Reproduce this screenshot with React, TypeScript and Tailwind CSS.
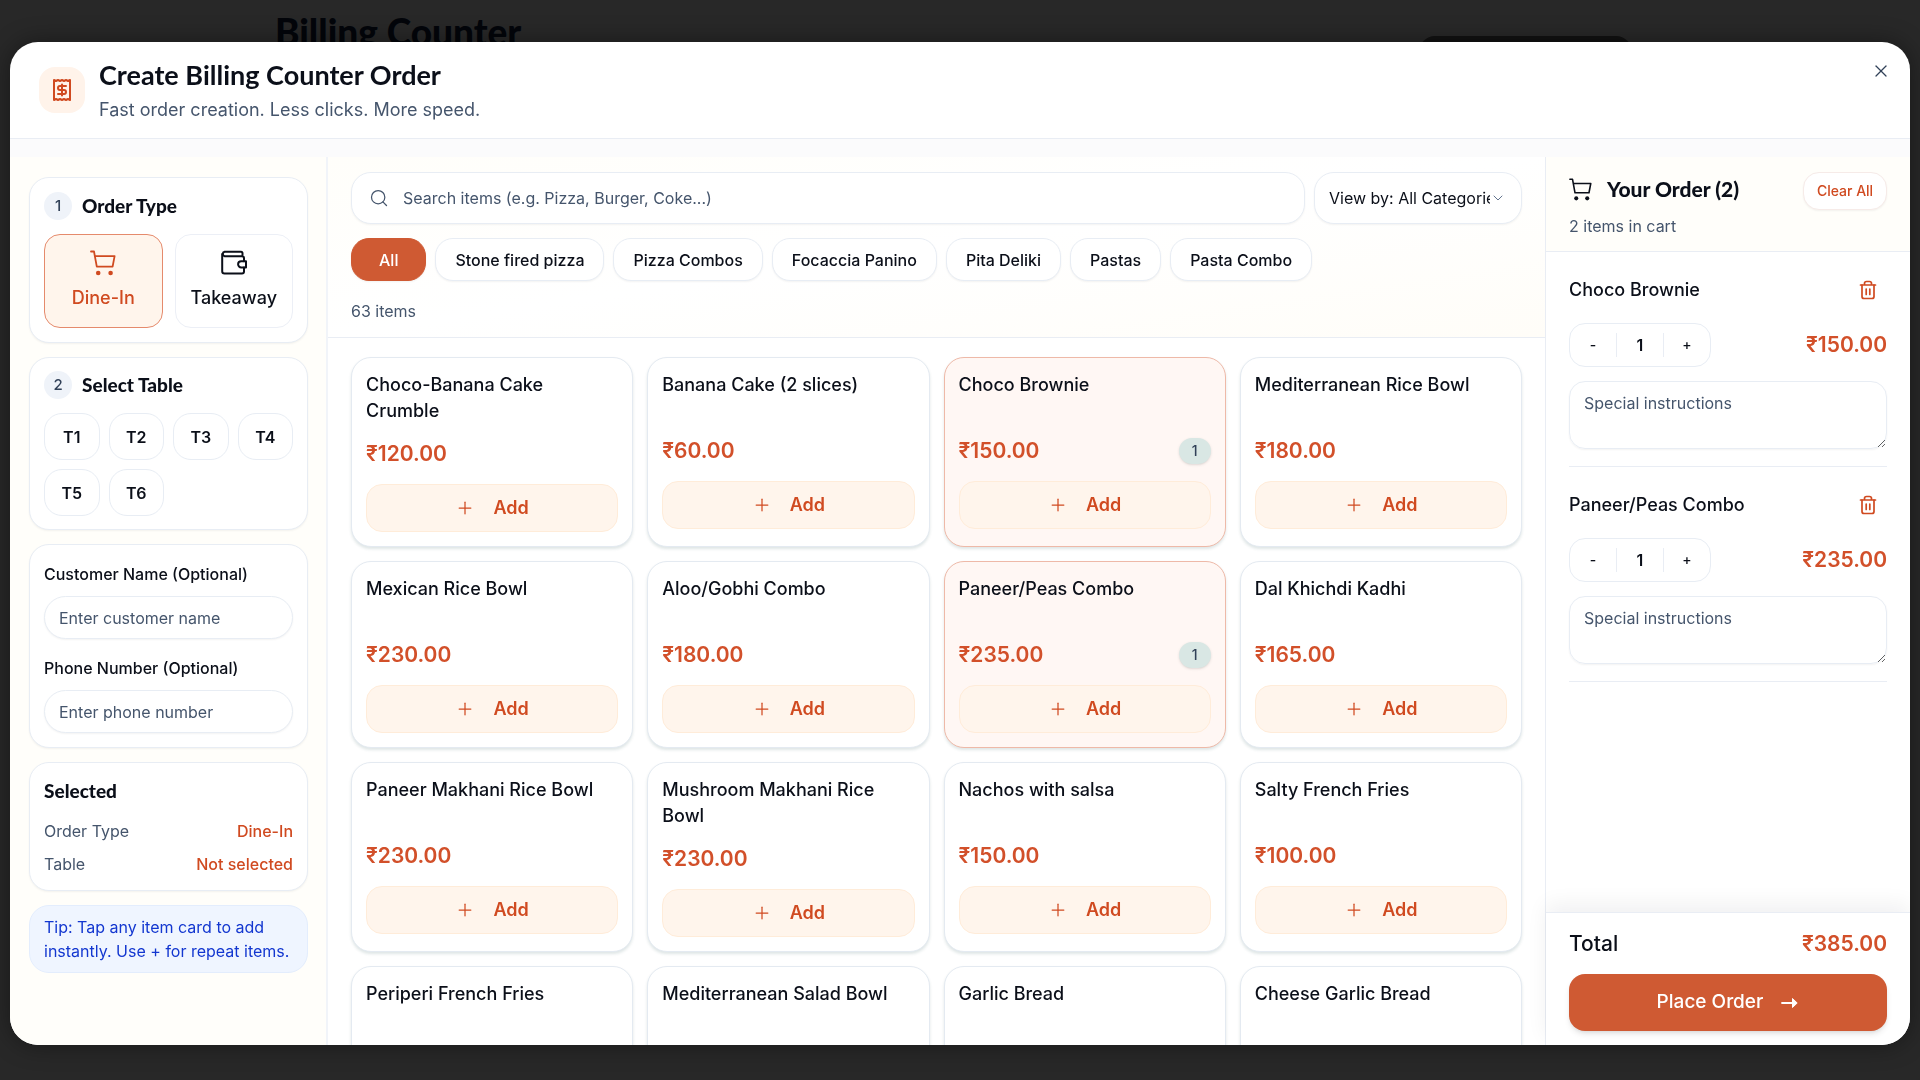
import { useState } from "react";
import type { ReactNode } from "react";
import cx from "clsx";
import { ChevronDown, Plus, Receipt, Search, X } from "lucide-react";

const CATEGORIES = [
  "All",
  "Stone fired pizza",
  "Pizza Combos",
  "Focaccia Panino",
  "Pita Deliki",
  "Pastas",
  "Pasta Combo",
];

const TABLES = ["T1", "T2", "T3", "T4", "T5", "T6"];

type MenuItem = {
  name: string;
  price: number;
};

const MENU: MenuItem[] = [
  { name: "Choco-Banana Cake Crumble", price: 120 },
  { name: "Banana Cake (2 slices)", price: 60 },
  { name: "Choco Brownie", price: 150 },
  { name: "Mediterranean Rice Bowl", price: 180 },
  { name: "Mexican Rice Bowl", price: 230 },
  { name: "Aloo/Gobhi Combo", price: 180 },
  { name: "Paneer/Peas Combo", price: 235 },
  { name: "Dal Khichdi Kadhi", price: 165 },
  { name: "Paneer Makhani Rice Bowl", price: 230 },
  { name: "Mushroom Makhani Rice Bowl", price: 230 },
  { name: "Nachos with salsa", price: 150 },
  { name: "Salty French Fries", price: 100 },
  { name: "Periperi French Fries", price: 120 },
  { name: "Mediterranean Salad Bowl", price: 210 },
  { name: "Garlic Bread", price: 110 },
  { name: "Cheese Garlic Bread", price: 140 },
];

type Cart = Record<string, number>;

const formatPrice = (value: number) => `₹${value.toFixed(2)}`;

function CartIcon({ className }: { className?: string }) {
  return (
    <svg viewBox="0 0 26 26" fill="none" className={className} aria-hidden="true">
      <path
        d="M1 1.5h3l2.8 15.2h15.800l2-10.500H4.800"
        stroke="currentColor"
        strokeWidth="1.8"
        strokeLinecap="round"
        strokeLinejoin="round"
      />
      <circle cx="8.2" cy="23" r="2.3" fill="currentColor" />
      <circle cx="20.6" cy="23" r="2.3" fill="currentColor" />
    </svg>
  );
}

function WalletIcon({ className }: { className?: string }) {
  return (
    <svg
      viewBox="0 0 26 26"
      fill="none"
      stroke="currentColor"
      strokeWidth="2"
      strokeLinecap="round"
      strokeLinejoin="round"
      className={className}
      aria-hidden="true"
    >
      <path d="M21.5 6V3.2c0-.9-.6-1.5-1.500-1.500H3.600a2.300 2.300 0 0 0 0 4.500H21c1.200 0 2 .8 2 2v3" />
      <path d="M23 17.500v4c0 1.200-.8 2-2 2H3.500c-1.300 0-2.300-1-2.300-2.300V3.900" />
      <path d="M25 11.200h-4.800a3.100 3.100 0 0 0 0 6.200H25z" />
    </svg>
  );
}

function TrashIcon({ className }: { className?: string }) {
  return (
    <svg
      viewBox="0 0 18 20"
      fill="none"
      stroke="currentColor"
      strokeWidth="1.7"
      strokeLinecap="round"
      strokeLinejoin="round"
      className={className}
      aria-hidden="true"
    >
      <path d="M1.500 5h15M5.500 5V3.500c0-1.100.9-2 2-2h3c1.100 0 2 .9 2 2V5" />
      <path d="M3 5v11.500c0 1.100.9 2 2 2h8c1.100 0 2-.9 2-2V5" />
      <path d="M7.200 9v5.500M10.800 9v5.500" />
    </svg>
  );
}

function ArrowIcon({ className }: { className?: string }) {
  return (
    <svg viewBox="0 0 18 14" className={className} aria-hidden="true">
      <path d="M1 7h12" stroke="currentColor" strokeWidth="1.8" strokeLinecap="round" />
      <path
        d="M11.500 2.500 16.200 7l-4.700 4.500z"
        fill="currentColor"
        stroke="currentColor"
        strokeLinejoin="round"
      />
    </svg>
  );
}

function Panel({ children, className }: { children: ReactNode; className?: string }) {
  return (
    <section
      className={cx(
        "rounded-[20px] border border-[#e8edf4] bg-white px-[14px] shadow-xs",
        className
      )}
    >
      {children}
    </section>
  );
}

function StepTitle({ step, title }: { step: number; title: string }) {
  return (
    <div className="flex items-center gap-[10px]">
      <span className="flex size-7 items-center justify-center rounded-full bg-[#eff3f9] text-[15px] font-medium text-slate-700">
        {step}
      </span>
      <h3 className="font-[Lato] text-[19px] font-black leading-7">{title}</h3>
    </div>
  );
}

type FieldProps = {
  id: string;
  label: string;
  placeholder: string;
};

function Field({ id, label, placeholder }: FieldProps) {
  return (
    <div>
      <label htmlFor={id} className="block text-base font-medium leading-6">
        {label}
      </label>
      <input
        id={id}
        placeholder={placeholder}
        className="mt-[10px] block h-[43px] w-full rounded-full border border-[#e8edf4] bg-white px-[14px] text-base shadow-xs outline-none placeholder:text-slate-600"
      />
    </div>
  );
}

type OrderType = "Dine-In" | "Takeaway";

function Sidebar() {
  const [orderType, setOrderType] = useState<OrderType>("Dine-In");
  const [table, setTable] = useState("");

  return (
    <aside className="w-[318px] shrink-0 space-y-[14px] border-r-2 border-[#f1f4f9] bg-[#fffefa] pt-5 pr-[18px] pl-[19px]">
      <Panel className="py-[14px]">
        <StepTitle step={1} title="Order Type" />
        <div className="mt-[14px] grid grid-cols-2 gap-3">
          {(["Dine-In", "Takeaway"] as const).map((type) => (
            <button
              key={type}
              onClick={() => setOrderType(type)}
              className={cx(
                "flex h-[94px] flex-col items-center justify-center gap-2 rounded-2xl border text-lg font-medium",
                orderType === type
                  ? "border-[#e58a6c] bg-[#fff5ec] text-[#d04a20]"
                  : "border-[#eceff6] bg-white"
              )}
            >
              {type === "Dine-In" ? (
                <CartIcon className="size-[26px]" />
              ) : (
                <WalletIcon className="size-[26px]" />
              )}
              {type}
            </button>
          ))}
        </div>
      </Panel>

      <Panel className="py-[13px]">
        <StepTitle step={2} title="Select Table" />
        <div className="mt-[14px] grid grid-cols-4 gap-[9px]">
          {TABLES.map((name) => (
            <button
              key={name}
              onClick={() => setTable(name)}
              className="h-[47px] rounded-[18px] border border-[#e8edf4] bg-white text-base font-semibold"
            >
              {name}
            </button>
          ))}
        </div>
      </Panel>

      <Panel className="space-y-[17px] pt-[17px] pb-[14px]">
        <Field
          id="customer-name"
          label="Customer Name (Optional)"
          placeholder="Enter customer name"
        />
        <Field
          id="customer-phone"
          label="Phone Number (Optional)"
          placeholder="Enter phone number"
        />
      </Panel>

      <Panel className="py-[14px]">
        <h3 className="font-[Lato] text-[19px] font-black leading-7">Selected</h3>
        <dl className="mt-[14px] space-y-[9px] text-base">
          <div className="flex justify-between">
            <dt className="text-slate-600">Order Type</dt>
            <dd className="font-medium text-[#d04a20]">{orderType}</dd>
          </div>
          <div className="flex justify-between">
            <dt className="text-slate-600">Table</dt>
            <dd className="font-medium text-[#d04a20]">{table || "Not selected"}</dd>
          </div>
        </dl>
      </Panel>

      <p className="rounded-[20px] border border-[#e3edfd] bg-[#eff5ff] py-[9px] pl-[14px] pr-2 text-base text-[#1337d0]">
        Tip: Tap any item card to add instantly. Use + for repeat items.
      </p>
    </aside>
  );
}

type ItemCardProps = {
  item: MenuItem;
  quantity: number;
  onAdd: () => void;
};

function ItemCard({ item, quantity, onAdd }: ItemCardProps) {
  return (
    <article
      className={cx(
        "rounded-[20px] border p-[14px] shadow-[0_2px_3px_rgba(30,80,80,0.14)]",
        quantity > 0 ? "border-[#eeb9a8] bg-[#fff7f4]" : "border-[#e4eaf1] bg-white"
      )}
    >
      <h4 className="min-h-[49px] text-lg font-medium leading-[26px]">{item.name}</h4>
      <div className="mt-4 flex h-7 items-center justify-between">
        <span className="text-[21px] font-semibold text-[#d2502a]">
          {formatPrice(item.price)}
        </span>
        {quantity > 0 && (
          <span className="flex h-[26px] w-8 items-center justify-center rounded-full bg-[#d9e7e4] text-sm font-medium text-slate-700 shadow-sm">
            {quantity}
          </span>
        )}
      </div>
      <button
        onClick={onAdd}
        className="mt-4 flex h-12 w-full items-center justify-center gap-[18px] rounded-2xl border border-[#ffecd9] bg-[#fff5ec] text-lg font-semibold text-[#d04a20]"
      >
        <Plus className="size-[20px]" strokeWidth={1.5} />
        Add
      </button>
    </article>
  );
}

function Menu({ cart, onAdd }: { cart: Cart; onAdd: (name: string) => void }) {
  const [category, setCategory] = useState("All");

  return (
    <main className="flex min-w-0 flex-1 flex-col">
      <div className="border-b border-[#e9edf4] bg-linear-to-br from-[#fffefa] via-white to-[#fffdf8] px-[23px] pt-[15px] pb-[14px]">
        <div className="flex gap-[9px]">
          <label className="flex h-[52px] flex-1 items-center gap-[14px] rounded-[20px] border border-[#e8edf4] bg-white px-[17px] shadow-xs">
            <Search className="size-5 text-slate-600" strokeWidth={1.5} />
            <input
              aria-label="Search items"
              placeholder="Search items (e.g. Pizza, Burger, Coke...)"
              className="min-w-0 flex-1 text-base outline-none placeholder:text-slate-600"
            />
          </label>
          <div className="relative w-[208px]">
            <select
              aria-label="View by category"
              className="h-[52px] w-full appearance-none rounded-[20px] border border-[#e8edf4] bg-white pl-[14px] pr-[31px] text-base shadow-xs outline-none"
            >
              <option>View by: All Categories</option>
            </select>
            <ChevronDown
              className="pointer-events-none absolute top-[18px] right-4 size-4 text-slate-500"
              strokeWidth={1.5}
            />
          </div>
        </div>

        <div className="mt-[14px] flex gap-[9px]">
          {CATEGORIES.map((name) => (
            <button
              key={name}
              onClick={() => setCategory(name)}
              className={cx(
                "h-[43px] rounded-[18px] border text-base font-medium shadow-xs",
                name === "All" ? "px-[27px]" : "px-[19px]",
                category === name
                  ? "border-[#cf5a33] bg-[#cf5a33] text-white"
                  : "border-[#e8edf4] bg-white"
              )}
            >
              {name}
            </button>
          ))}
        </div>
        <p className="mt-[18px] text-base text-slate-600">63 items</p>
      </div>

      <div className="min-h-0 flex-1 overflow-y-auto px-[23px] pt-[19px] [scrollbar-width:none]">
        <div className="grid grid-cols-4 gap-[14px]">
          {MENU.map((item) => (
            <ItemCard
              key={item.name}
              item={item}
              quantity={cart[item.name] ?? 0}
              onAdd={() => onAdd(item.name)}
            />
          ))}
        </div>
      </div>
    </main>
  );
}

type OrderPanelProps = {
  cart: Cart;
  onChange: (name: string, quantity: number) => void;
  onClear: () => void;
};

function OrderPanel({ cart, onChange, onClear }: OrderPanelProps) {
  const lines = MENU.filter((item) => cart[item.name] > 0);
  const total = lines.reduce((sum, item) => sum + item.price * cart[item.name], 0);

  return (
    <aside className="flex w-[365px] shrink-0 flex-col border-l border-[#e9edf4]">
      <div className="border-b border-[#e9edf4] bg-[#fffefa] px-[23px] pt-[15px] pb-[13px]">
        <div className="flex items-start justify-between">
          <h2 className="flex h-[34px] items-center gap-[15px] font-[Lato] text-[21px] font-black">
            <CartIcon className="size-[23px]" />
            Your Order ({lines.length})
          </h2>
          <button
            onClick={onClear}
            className="h-[38px] w-[84px] rounded-2xl border border-[#f6ebe8] bg-white text-sm font-medium text-[#d04a20] shadow-xs"
          >
            Clear All
          </button>
        </div>
        <p className="mt-1 text-base text-slate-600">{lines.length} items in cart</p>
      </div>

      <ul className="min-h-0 flex-1 overflow-y-auto px-[23px] [scrollbar-width:none]">
        {lines.map((item) => (
          <li key={item.name} className="border-b border-[#e9edf4] pt-6 pb-[17px]">
            <div className="flex h-7 items-center justify-between">
              <h4 className="text-lg font-medium">{item.name}</h4>
              <button
                aria-label={`Remove ${item.name}`}
                onClick={() => onChange(item.name, 0)}
                className="mr-[10px] text-[#d04a20]"
              >
                <TrashIcon className="h-5 w-[18px]" />
              </button>
            </div>
            <div className="mt-[19px] flex items-center justify-between">
              <div className="flex h-[44px] w-[142px] items-center rounded-2xl border border-[#e8edf4] text-center">
                <button
                  aria-label="Decrease"
                  onClick={() => onChange(item.name, cart[item.name] - 1)}
                  className="flex-1 text-sm font-medium"
                >
                  -
                </button>
                <span className="w-12 border-x border-[#e9edf4] text-base font-semibold">
                  {cart[item.name]}
                </span>
                <button
                  aria-label="Increase"
                  onClick={() => onChange(item.name, cart[item.name] + 1)}
                  className="flex-1 text-sm font-medium"
                >
                  +
                </button>
              </div>
              <span className="text-[21px] font-semibold text-[#d2502a]">
                {formatPrice(item.price * cart[item.name])}
              </span>
            </div>
            <textarea
              aria-label="Special instructions"
              placeholder="Special instructions"
              className="mt-[14px] block h-[68px] w-full rounded-2xl border border-[#e8edf4] px-[14px] py-[9px] text-base shadow-xs outline-none placeholder:text-slate-600"
            />
          </li>
        ))}
      </ul>

      <div className="border-t border-[#e9edf4] bg-white px-[23px] pt-4 pb-[14px] shadow-[0_-8px_20px_rgba(15,23,42,0.06)]">
        <div className="flex h-[30px] items-center justify-between">
          <span className="text-[21px] font-medium">Total</span>
          <span className="text-[21px] font-semibold text-[#d2502a]">{formatPrice(total)}</span>
        </div>
        <button className="mt-[15px] flex h-[57px] w-full items-center justify-center gap-[18px] rounded-2xl bg-[#cf5a33] text-[19px] font-medium text-white shadow-md">
          Place Order
          <ArrowIcon className="h-[14px] w-[18px]" />
        </button>
      </div>
    </aside>
  );
}

function App() {
  const [cart, setCart] = useState<Cart>({
    "Choco Brownie": 1,
    "Paneer/Peas Combo": 1,
  });

  const setQuantity = (name: string, quantity: number) =>
    setCart((prev) => ({ ...prev, [name]: Math.max(0, quantity) }));

  return (
    <div className="h-screen overflow-hidden bg-[#282828] font-['Inter',sans-serif] text-[#0b0f19]">
      <div className="flex items-start justify-between pt-[8px] pr-[288px] pl-[275px]">
        <h1 className="font-[Lato] text-[37px] font-black leading-[48px] text-[#03050a]">
          Billing Counter
        </h1>
        <div className="mt-[28px] h-14 w-[213px] rounded-2xl bg-[#121212]" />
      </div>

      <div className="fixed inset-0 px-[10px] pt-[42px] pb-[35px]">
        <div
          role="dialog"
          aria-labelledby="dialog-title"
          className="flex h-full flex-col overflow-hidden rounded-[28px] bg-white shadow-[0_0_24px_rgba(0,0,0,0.4)]"
        >
          <header className="flex items-start gap-[14px] border-b border-[#e9edf4] pt-[13px] pr-[19px] pb-[13px] pl-[29px]">
            <span className="mt-[12px] flex size-[46px] items-center justify-center rounded-2xl bg-[#fff3ea] text-[#d04a20]">
              <Receipt className="size-6" strokeWidth={2} />
            </span>
            <div className="flex-1">
              <h2 id="dialog-title" className="font-[Lato] text-[27px] font-bold leading-[40px]">
                Create Billing Counter Order
              </h2>
              <p className="text-lg leading-[30px] text-slate-600">
                Fast order creation. Less clicks. More speed.
              </p>
            </div>
            <button aria-label="Close" className="mt-[6px] text-slate-700">
              <X className="size-5" strokeWidth={1.5} />
            </button>
          </header>

          <div className="flex min-h-0 flex-1 border-t-[18px] border-[#fbfbfc]">
            <Sidebar />
            <Menu cart={cart} onAdd={(name) => setQuantity(name, (cart[name] ?? 0) + 1)} />
            <OrderPanel cart={cart} onChange={setQuantity} onClear={() => setCart({})} />
          </div>
        </div>
      </div>
    </div>
  );
}

export default App;
